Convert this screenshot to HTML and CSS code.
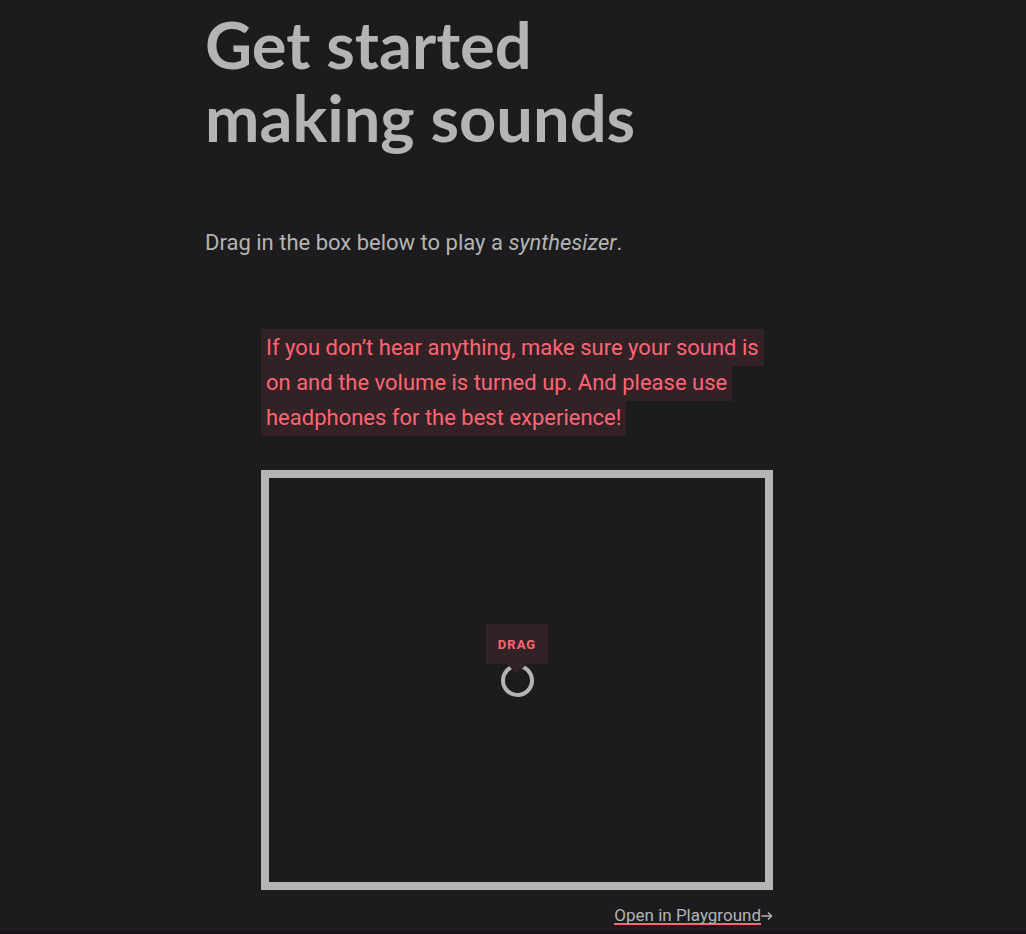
FILE: index.html
```html
<!DOCTYPE html>
<html lang="en">
<head>
<meta charset="utf-8">
<meta name="viewport" content="width=device-width, initial-scale=1">
<title>Get started making sounds</title>
<link rel="stylesheet" href="styles.css">
</head>
<body>
<main class="lesson">
  <h1 class="title">Get started<br>making sounds</h1>
  <p class="intro">Drag in the box below to play a <em>synthesizer</em>.</p>
  <section class="demo">
    <p class="notice"><mark class="highlight">If you don’t hear anything, make sure your sound is on and the volume is turned up. And please use headphones for the best experience!</mark></p>
    <div class="pad">
      <button class="handle" type="button" aria-label="Drag"><span class="tip">DRAG</span></button>
    </div>
    <p class="more"><a class="link" href="#playground">Open in Playground</a><svg class="arrow" viewBox="0 0 12 12" aria-hidden="true"><path d="M.5 6H10.5M7 2.500L10.5 6L7 9.500"/></svg></p>
  </section>
</main>
<footer class="edge"></footer>
</body>
</html>
```
FILE: styles.css
```css
:root {
  --bg: #1c1c1e;
  --ink: #b4b4b4;
  --accent: #ff6575;
  --tint: #332225;
}
* { box-sizing: border-box; }
body {
  margin: 0;
  min-height: 100vh;
  display: flex;
  flex-direction: column;
  background: var(--bg);
  color: var(--ink);
  font: 22px/35px Roboto, "Liberation Sans", sans-serif;
}
.lesson {
  flex: 1;
  width: 100%;
  max-width: 829px;
  padding: 8px 0 0 205px;
}
.title {
  margin: 0;
  font: 700 65px/73px Lato, sans-serif;
}
.intro { margin: 71px 0 0; }
.demo { margin: 70px 56px 0; }
.notice { margin: 0; }
.highlight {
  padding: 6px 5px;
  background: var(--tint);
  color: var(--accent);
  -webkit-box-decoration-break: clone;
  box-decoration-break: clone;
}
.pad {
  display: flex;
  align-items: center;
  justify-content: center;
  height: 420px;
  margin-top: 35px;
  border: 8px solid var(--ink);
}
.handle {
  position: relative;
  width: 33px;
  height: 33px;
  padding: 0;
  border: 4px solid var(--ink);
  border-radius: 50%;
  background: none;
}
.tip {
  position: absolute;
  bottom: 29px;
  left: 50%;
  transform: translateX(-50%);
  padding: 2px 12px 0;
  background: var(--tint);
  color: var(--accent);
  font: 700 13px/38px Roboto, sans-serif;
  letter-spacing: 1px;
}
.tip::after {
  content: "";
  position: absolute;
  top: 100%;
  left: 50%;
  margin-left: -10px;
  border: 10px solid transparent;
  border-top-color: var(--tint);
  border-bottom: 0;
}
.more {
  display: flex;
  align-items: center;
  justify-content: flex-end;
  margin: 17px 0 0;
  font-size: 17px;
  line-height: 16px;
}
.link {
  color: inherit;
  text-decoration: none;
  border-bottom: 2px solid var(--accent);
}
.arrow {
  width: 12px;
  height: 12px;
  fill: none;
  stroke: var(--ink);
  stroke-width: 1.4;
}
.edge { height: 3px; background: #191319; }
```
